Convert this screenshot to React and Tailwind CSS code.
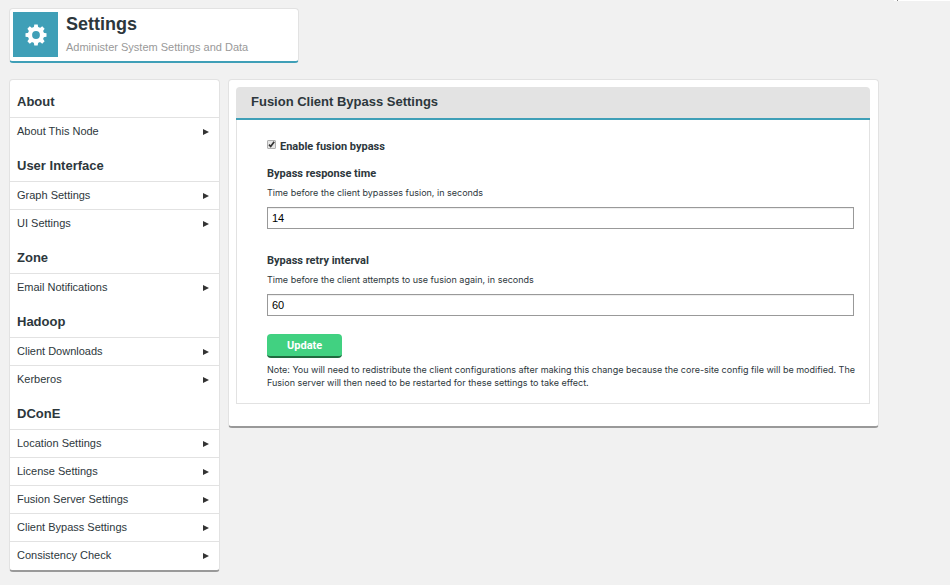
import React, { useState } from 'react';

const menuSections = [
    { title: 'About', items: ['About This Node'] },
    { title: 'User Interface', items: ['Graph Settings', 'UI Settings'] },
    { title: 'Zone', items: ['Email Notifications'] },
    { title: 'Hadoop', items: ['Client Downloads', 'Kerberos'] },
    {
        title: 'DConE',
        items: [
            'Location Settings',
            'License Settings',
            'Fusion Server Settings',
            'Client Bypass Settings',
            'Consistency Check',
        ],
    },
];

const GearIcon = () => (
    <svg viewBox="0 0 22 22" className="size-[22px]" aria-hidden="true">
        <g fill="#fff">
            <circle cx="11" cy="11" r="8.2" />
            {/* Teeth */}
            {[0, 45, 90, 135, 180, 225, 270, 315].map((angle) => (
                <path key={angle} d="M8.7 4 L9.3 0.5 H12.7 L13.3 4 Z" transform={`rotate(${angle} 11 11)`} />
            ))}
        </g>
        <circle cx="11" cy="11" r="3.9" fill="#3f9fb7" />
    </svg>
);

const PageHeader = () => (
    <header className="flex w-[290px] gap-2 rounded border border-[#e2e2e2] border-b-2 border-b-[#3f9fb7] bg-white p-[3px]">
        <div className="flex size-[45px] items-center justify-center bg-[#3f9fb7]">
            <GearIcon />
        </div>
        <div>
            <h1 className="text-lg leading-6 font-bold">Settings</h1>
            <p className="text-[11px] leading-[22px] text-[#999]">Administer System Settings and Data</p>
        </div>
    </header>
);

const Sidebar = () => (
    <nav className="w-[211px] shrink-0 rounded border border-[#e2e2e2] border-b-2 border-b-[#999] bg-white py-px">
        {menuSections.map((section) => (
            <section key={section.title}>
                <h2 className="px-[7px] pt-3 pb-1.5 text-[13px] leading-[18px] font-bold">{section.title}</h2>
                <ul>
                    {section.items.map((item) => (
                        <li key={item} className="border-t border-[#e2e2e2]">
                            <a href="#" className="flex h-[27px] items-center justify-between pr-2.5 pl-[7px] text-[11px]">
                                {item}
                                <svg viewBox="0 0 6 6" className="size-1.5" aria-hidden="true">
                                    <path d="M0 0 L6 3 L0 6 Z" fill="#333" />
                                </svg>
                            </a>
                        </li>
                    ))}
                </ul>
            </section>
        ))}
    </nav>
);

const Field = ({ id, label, help, value, onChange }) => (
    <div>
        <label htmlFor={id} className="block font-[Roboto,sans-serif] text-[11px] leading-4 font-bold">
            {label}
        </label>
        <p id={`${id}-help`} className="mt-[3px] font-[Inter,sans-serif] text-[9px] leading-4">
            {help}
        </p>
        <input
            id={id}
            type="text"
            aria-describedby={`${id}-help`}
            value={value}
            onChange={(e) => onChange(e.target.value)}
            className="mt-1.5 block h-[22px] w-full border border-[#999] bg-white px-1 text-[11px] text-black shadow-[inset_0_1px_1px_#eee]"
        />
    </div>
);

const BypassSettings = () => {
    const [enabled, setEnabled] = useState(true);
    const [responseTime, setResponseTime] = useState('14');
    const [retryInterval, setRetryInterval] = useState('60');

    return (
        <main className="flex-1 rounded border border-[#e2e2e2] border-b-2 border-b-[#999] bg-white pt-[7px] pr-2 pb-[22px] pl-[7px]">
            <h2 className="rounded-t-sm border-b-2 border-[#3f9fb7] bg-[#e3e3e3] px-[15px] pt-[5px] pb-1.5 text-[13px] leading-5 font-bold">
                Fusion Client Bypass Settings
            </h2>
            <form
                onSubmit={(e) => e.preventDefault()}
                className="border border-t-0 border-[#e2e2e2] pt-[19px] pr-[15px] pb-3.5 pl-[30px]"
            >
                <label className="flex items-start gap-1 font-[Roboto,sans-serif] text-[11px] leading-4 font-bold">
                    <span className="mt-px grid size-[9px]">
                        <input
                            type="checkbox"
                            checked={enabled}
                            onChange={(e) => setEnabled(e.target.checked)}
                            className="peer col-start-1 row-start-1 size-[9px] appearance-none rounded-[1px] border border-[#b0b0b0] bg-[#e6e6e6]"
                        />
                        <svg
                            viewBox="0 0 9 9"
                            className="pointer-events-none invisible col-start-1 row-start-1 size-[9px] peer-checked:visible"
                            aria-hidden="true"
                        >
                            <path d="M2 4.6 L3.7 6.5 L7.2 1.8" fill="none" stroke="#333" strokeWidth="1.7" />
                        </svg>
                    </span>
                    Enable fusion bypass
                </label>

                <div className="mt-[11px] space-y-6">
                    <Field
                        id="response-time"
                        label="Bypass response time"
                        help="Time before the client bypasses fusion, in seconds"
                        value={responseTime}
                        onChange={setResponseTime}
                    />
                    <Field
                        id="retry-interval"
                        label="Bypass retry interval"
                        help="Time before the client attempts to use fusion again, in seconds"
                        value={retryInterval}
                        onChange={setRetryInterval}
                    />
                </div>

                <button
                    type="submit"
                    className="mt-[18px] block h-6 rounded border-b-2 border-[#1f6b3f] bg-[#41d181] px-5 pt-0.5 font-[Roboto,sans-serif] text-[11px] font-bold text-white"
                >
                    Update
                </button>
                <p className="mt-[5px] -mr-2 font-[Inter,sans-serif] text-[9px] leading-[13px]">
                    Note: You will need to redistribute the client configurations after making this change because the
                    core-site config file will be modified. The Fusion server will then need to be restarted for these
                    settings to take effect.
                </p>
            </form>
        </main>
    );
};

const App = () => (
    <div className="relative min-h-screen bg-[#f1f1f1] px-[9px] pt-2 pb-3 font-['Liberation_Sans',Arial,sans-serif] text-[#2d373c]">
        <div className="absolute top-0 right-0 h-px w-14 bg-white pl-[3px]">
            <div className="size-px bg-[#888]" />
        </div>
        <PageHeader />
        <div className="mt-4 mr-[62px] flex items-start gap-2">
            <Sidebar />
            <BypassSettings />
        </div>
    </div>
);

export default App;
